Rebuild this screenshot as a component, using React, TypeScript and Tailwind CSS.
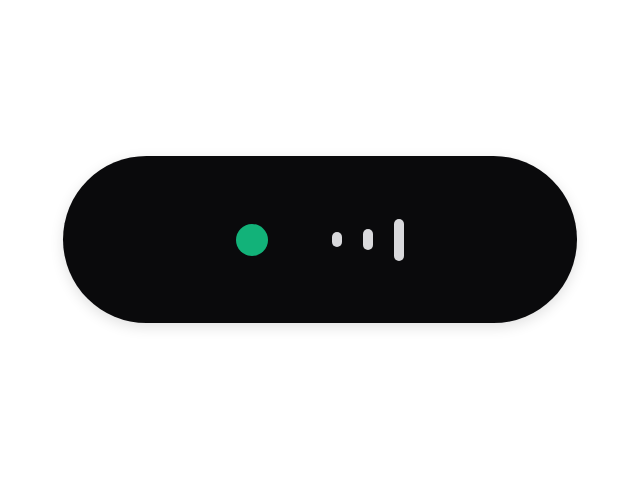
export default function App() {
  return (
    <div className="flex min-h-screen w-full items-center justify-center bg-white">
      <div className="flex h-[167px] w-[514px] items-center justify-center gap-16 rounded-full bg-[#0a0a0c] shadow-[0_4px_14px_rgba(0,0,0,0.12)]">
        <div className="h-8 w-8 rounded-full bg-[#12b279]" />
        <div className="flex items-center gap-[21px]">
          <div className="h-[15px] w-[10px] rounded-full bg-[#d9d9dc]" />
          <div className="h-[21px] w-[10px] rounded-full bg-[#d9d9dc]" />
          <div className="h-[42px] w-[10px] rounded-full bg-[#d9d9dc]" />
        </div>
      </div>
    </div>
  );
}
